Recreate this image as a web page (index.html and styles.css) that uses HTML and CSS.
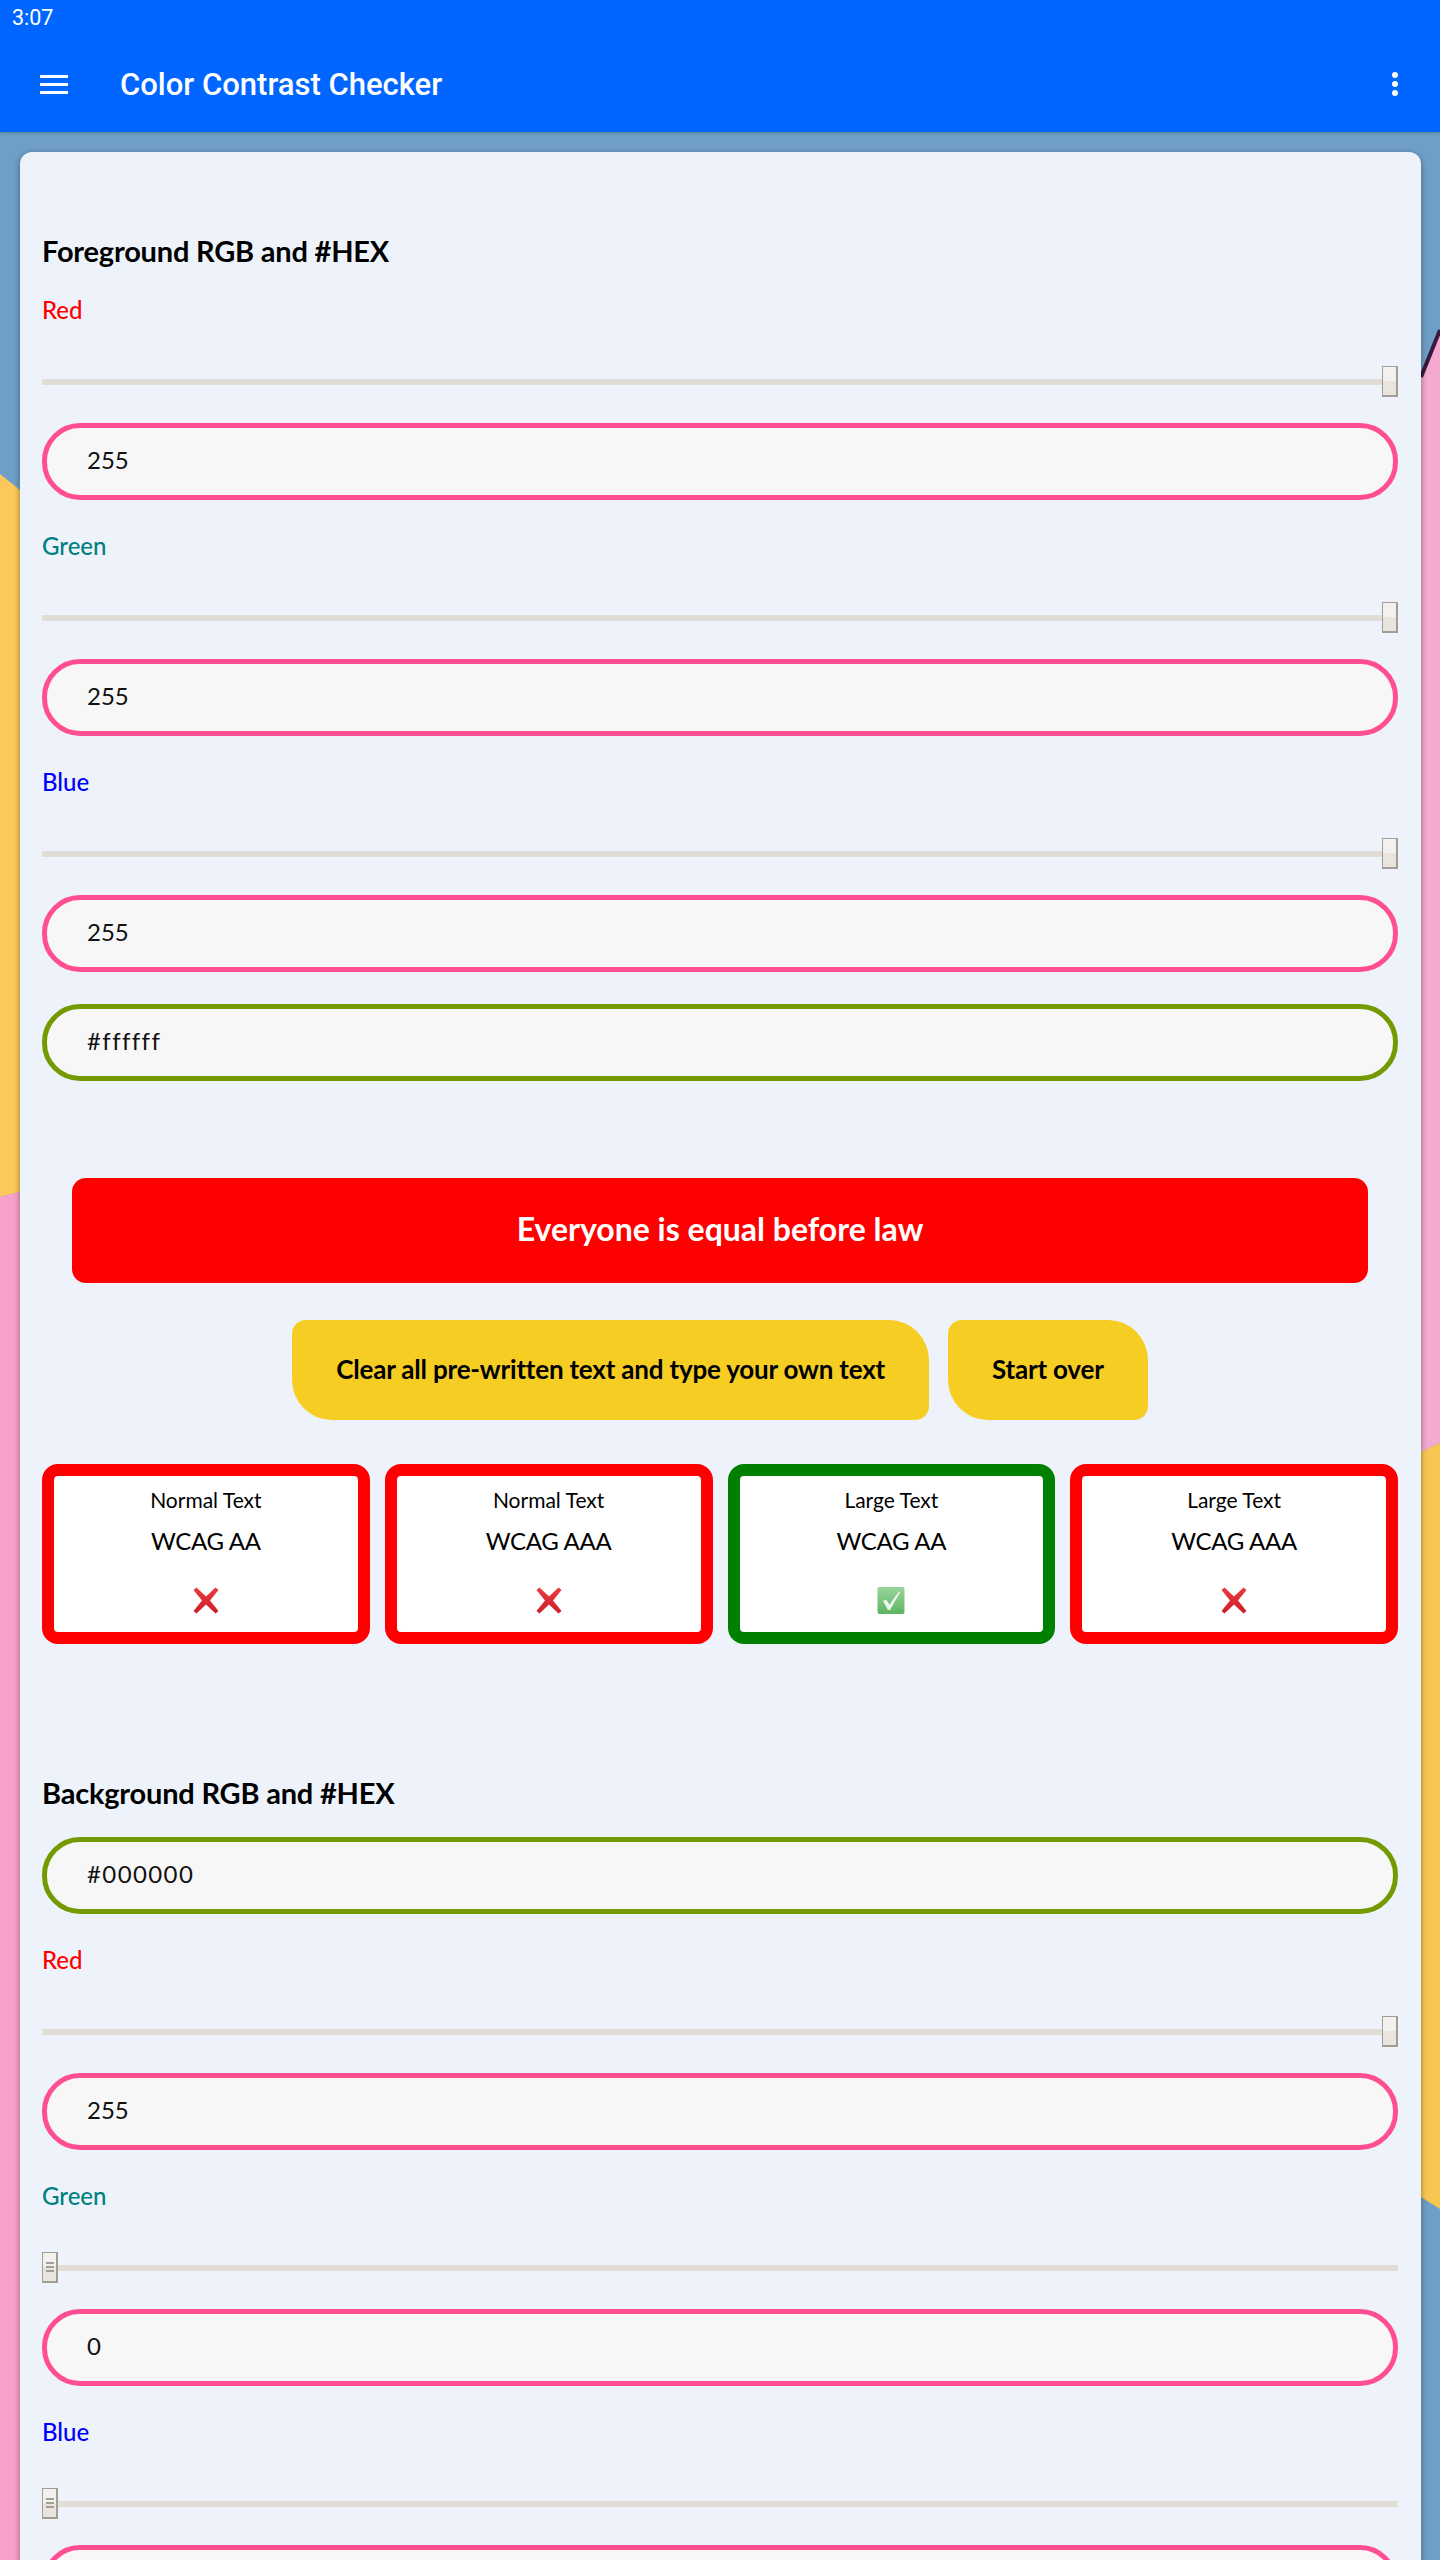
FILE: index.html
```html
<!DOCTYPE html>
<html lang="en">

<head>
  <meta charset="UTF-8">
  <meta name="viewport" content="width=device-width, initial-scale=1.0">
  <title>Color Contrast Checker</title>

  <link rel="stylesheet" href="styles.css">
</head>

<body>
  <svg class="wallpaper" viewBox="0 0 1440 2560" aria-hidden="true">
    <rect width="1440" height="2560" fill="#6f9fc6"/>
    <polygon points="0,474 20,490 20,1192 0,1197" fill="#fbc85a"/>
    <polygon points="0,1197 20,1192 20,2560 0,2560" fill="#f8a0cb"/>
    <polygon points="1421,377 1440,330 1440,1443 1421,1452" fill="#f4a9d0"/>
    <polygon points="1421,1452 1440,1443 1440,2209 1421,2197" fill="#f6c650"/>
    <line x1="1421" y1="377" x2="1440" y2="330" stroke="#3a1a3a" stroke-width="4"/>
  </svg>

  <svg class="defs" aria-hidden="true">
    <defs>
      <linearGradient id="cross-fill" x1="0" y1="0" x2="0" y2="1">
        <stop offset="0" stop-color="#ec3a42"/>
        <stop offset="1" stop-color="#cc1f28"/>
      </linearGradient>
      <linearGradient id="tick-fill" x1="0" y1="0" x2="0" y2="1">
        <stop offset="0" stop-color="#9ad49c"/>
        <stop offset="1" stop-color="#5db562"/>
      </linearGradient>
      <symbol id="cross" viewBox="0 0 28 27">
        <path d="M1.500 3 4.500 .5 14 9.500 23.500 .5 26.500 3 18 13.500 26.500 24 23.500 26.500 14 17.500 4.500 26.500 1.500 24 10 13.500Z" fill="url(#cross-fill)"/>
      </symbol>
      <symbol id="tick" viewBox="0 0 28 27">
        <rect x=".5" y="0" width="27" height="27" rx="2" fill="url(#tick-fill)"/>
        <path d="M6 14 9 12.500 12.500 17.500 22 4.500 23 5.500 13 23 11 23Z" fill="#eef7ee"/>
      </symbol>
    </defs>
  </svg>

  <header class="appbar">
    <div class="status-time">3:07</div>
    <div class="toolbar">
      <button class="menu-btn" aria-label="Menu"><span></span><span></span><span></span></button>
      <h1 class="app-title">Color Contrast Checker</h1>
      <button class="more-btn" aria-label="More"><span></span><span></span><span></span></button>
    </div>
  </header>

  <main class="card">
    <section class="color-group foreground">
      <h2>Foreground RGB and #HEX</h2>

      <div class="channel">
        <label class="red">Red</label>
        <input class="slider" type="range" min="0" max="255" value="255">
        <input class="field pink" value="255">
      </div>
      <div class="channel">
        <label class="green">Green</label>
        <input class="slider" type="range" min="0" max="255" value="255">
        <input class="field pink" value="255">
      </div>
      <div class="channel">
        <label class="blue">Blue</label>
        <input class="slider" type="range" min="0" max="255" value="255">
        <input class="field pink" value="255">
      </div>
      <input class="field olive hex-fore" value="#ffffff">
    </section>

    <p class="preview">Everyone is equal before law</p>

    <div class="actions">
      <button class="action-btn">Clear all pre-written text and type your own text</button>
      <button class="action-btn">Start over</button>
    </div>

    <div class="results">
      <div class="result fail">
        <span class="result-type">Normal Text</span>
        <span class="result-level">WCAG AA</span>
        <svg class="mark"><use href="#cross"/></svg>
      </div>
      <div class="result fail">
        <span class="result-type">Normal Text</span>
        <span class="result-level">WCAG AAA</span>
        <svg class="mark"><use href="#cross"/></svg>
      </div>
      <div class="result pass">
        <span class="result-type">Large Text</span>
        <span class="result-level">WCAG AA</span>
        <svg class="mark"><use href="#tick"/></svg>
      </div>
      <div class="result fail">
        <span class="result-type">Large Text</span>
        <span class="result-level">WCAG AAA</span>
        <svg class="mark"><use href="#cross"/></svg>
      </div>
    </div>

    <section class="color-group background">
      <h2>Background RGB and #HEX</h2>
      <input class="field olive" value="#000000">

      <div class="channel">
        <label class="red">Red</label>
        <input class="slider" type="range" min="0" max="255" value="255">
        <input class="field pink" value="255">
      </div>
      <div class="channel">
        <label class="green">Green</label>
        <input class="slider grip" type="range" min="0" max="255" value="0">
        <input class="field pink" value="0">
      </div>
      <div class="channel">
        <label class="blue">Blue</label>
        <input class="slider grip" type="range" min="0" max="255" value="0">
        <input class="field pink" value="0">
      </div>
    </section>
  </main>
</body>

</html>
```

FILE: styles.css
```css
* {
  box-sizing: border-box;
}

html,
body {
  height: 2560px;
  margin: 0;
  overflow: hidden;
}

body {
  font-family: "Lato", "Open Sans", sans-serif;
}

.wallpaper {
  height: 2560px;
  left: 0;
  position: absolute;
  top: 0;
  width: 1440px;
  z-index: -1;
}

.defs {
  height: 0;
  position: absolute;
  width: 0;
}

.appbar {
  background: #0066ff;
  box-shadow: 0 1px 3px rgba(0, 0, 0, 0.2);
  color: #fff;
  font-family: "Roboto", sans-serif;
  height: 132px;
}

.status-time {
  font-size: 21.5px;
  height: 42px;
  line-height: 36px;
  padding-left: 12px;
}

.toolbar {
  align-items: center;
  display: flex;
  height: 84px;
  padding: 0 42px 0 40px;
}

.menu-btn,
.more-btn {
  background: none;
  border: 0;
  display: flex;
  flex-direction: column;
  padding: 0;
}

.menu-btn {
  gap: 5px;
  width: 28px;
}

.menu-btn span {
  background: #fff;
  display: block;
  height: 3px;
}

.more-btn {
  gap: 3px;
}

.more-btn span {
  background: #fff;
  border-radius: 50%;
  display: block;
  height: 6px;
  width: 6px;
}

.app-title {
  flex: 1;
  font-size: 31px;
  font-weight: 500;
  margin: 0 0 0 52px;
}

.card {
  background: #eef3fb;
  border-radius: 12px 12px 0 0;
  box-shadow: 0 2px 6px rgba(0, 0, 0, 0.4);
  height: 2500px;
  margin: 20px 19px 0 20px;
  padding: 0 23px 0 22px;
}

h2 {
  font-size: 29px;
  font-weight: 700;
  letter-spacing: -0.2px;
  line-height: 36px;
  margin: 0;
}

.foreground h2 {
  padding-top: 81px;
}

.background h2 {
  margin-top: 131px;
}

.channel label {
  display: block;
  font-size: 24px;
  font-weight: 500;
  line-height: 30px;
  margin-top: 31px;
}

.foreground .channel:first-of-type label {
  margin-top: 26px;
}

.red {
  color: #f00;
}

.green {
  color: #008080;
}

.blue {
  color: #00f;
}

.slider {
  appearance: none;
  -webkit-appearance: none;
  background: transparent;
  display: block;
  height: 32px;
  margin: 41px 0 25px;
  width: 100%;
}

.slider::-webkit-slider-runnable-track {
  background: #e1dcd6;
  height: 6px;
}

.slider::-webkit-slider-thumb {
  -webkit-appearance: none;
  background: linear-gradient(#f3f1ed 50%, #e8e4de 50%);
  border: 1px solid #a39e94;
  border-bottom-width: 2px;
  border-right-width: 2px;
  height: 31px;
  margin-top: -13px;
  width: 16px;
}

.slider.grip::-webkit-slider-thumb {
  background:
    linear-gradient(#a39e94, #a39e94) center 9px / 8px 2px no-repeat,
    linear-gradient(#a39e94, #a39e94) center 13px / 8px 2px no-repeat,
    linear-gradient(#a39e94, #a39e94) center 17px / 8px 2px no-repeat,
    linear-gradient(#f3f1ed 50%, #e8e4de 50%);
}

.field {
  background: #f7f7f7;
  border: 5px solid;
  border-radius: 38px;
  color: #111;
  display: block;
  font-family: inherit;
  font-size: 24px;
  height: 77px;
  outline: 0;
  padding: 0 40px 5px;
  width: 100%;
}

.pink {
  border-color: #ff4f91;
}

.olive {
  border-color: #739a00;
  letter-spacing: 1.4px;
}

.hex-fore {
  margin-top: 32px;
}

.background h2 + .field {
  margin-top: 26px;
}

.preview {
  align-items: center;
  background: #f00;
  border-radius: 14px;
  color: #fff;
  display: flex;
  font-size: 32px;
  font-weight: 700;
  height: 105px;
  justify-content: center;
  margin: 97px 30px 0;
  padding-bottom: 5px;
}

.actions {
  display: flex;
  gap: 19px;
  justify-content: center;
  margin-top: 37px;
}

.action-btn {
  background: #f6cd23;
  border: 0;
  border-radius: 14px 40px 14px 40px;
  color: #000;
  font-family: inherit;
  font-size: 26px;
  font-weight: 700;
  height: 100px;
  letter-spacing: -0.2px;
  padding: 0 44px 2px;
}

.results {
  display: grid;
  gap: 15px;
  grid-template-columns: repeat(4, 1fr);
  margin-top: 44px;
}

.result {
  align-items: center;
  background: #fff;
  border: 12px solid;
  border-radius: 16px;
  color: #000;
  display: flex;
  flex-direction: column;
  height: 180px;
  padding-top: 10px;
}

.fail {
  border-color: #f00;
}

.pass {
  border-color: #008000;
}

.result-type {
  font-size: 21px;
  line-height: 28px;
}

.result-level {
  font-size: 24px;
  letter-spacing: -0.3px;
  line-height: 30px;
  margin-top: 12px;
}

.mark {
  flex: none;
  height: 27px;
  margin-top: 31px;
  width: 28px;
}
```
